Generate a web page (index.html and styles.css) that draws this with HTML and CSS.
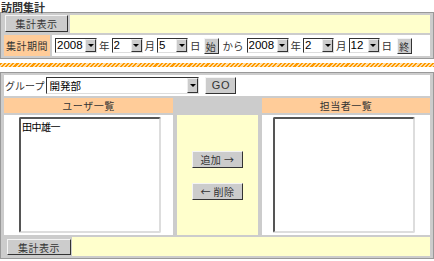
FILE: index.html
```html
<!DOCTYPE html>
<html>
<head>
	<title> 訪問集計 </title>
	<link rel="stylesheet" href="styles.css">
</head>
<body>
	<h1 class="title">訪問集計</h1>

	<div class="panel">
		<div class="row top">
			<input type="button" value="集計表示" class="btn btnSum">
			<div class="fill yellow"></div>
		</div>
		<div class="row dates">
			<div class="label orange">集計期間</div>
			<div class="fill white period">
				<span class="sel year"><select><option>2008</option></select><span class="arrow"></span></span>
				<span>年</span>
				<span class="sel small"><select><option>2</option></select><span class="arrow"></span></span>
				<span>月</span>
				<span class="sel small"><select><option>5</option></select><span class="arrow"></span></span>
				<span>日</span>
				<input type="button" value="始" class="btn btnDay">
				<span class="kara">から</span>
				<span class="sel year"><select><option>2008</option></select><span class="arrow"></span></span>
				<span>年</span>
				<span class="sel small"><select><option>2</option></select><span class="arrow"></span></span>
				<span>月</span>
				<span class="sel small"><select><option>12</option></select><span class="arrow"></span></span>
				<span>日</span>
				<input type="button" value="終" class="btn btnDay btnEnd">
			</div>
		</div>
	</div>

	<div class="hatch"></div>

	<div class="panel members">
		<div class="span white group">
			<span>グループ</span>
			<span class="sel groupSel"><select><option>開発部</option></select><span class="arrow"></span></span>
			<input type="button" value="GO" class="btn btnGo">
		</div>
		<div class="head orange">ユーザ一覧</div>
		<div class="head"></div>
		<div class="head orange">担当者一覧</div>
		<div class="white box boxLeft">
			<select class="list" multiple>
				<option>田中雄一</option>
			</select>
		</div>
		<div class="yellow moves">
			<input type="button" value="追加 →" class="btn btnMove">
			<input type="button" value="← 削除" class="btn btnMove">
		</div>
		<div class="white box boxRight">
			<select class="list" multiple></select>
		</div>
		<div class="span row bottom">
			<input type="button" value="集計表示" class="btn btnSum2">
			<div class="fill yellow"></div>
		</div>
	</div>
</body>
</html>
```

FILE: styles.css
```css
body {
	margin: 0;
	color: #333;
	background: #fff;
	font-family: "Noto Sans CJK JP", sans-serif;
	font-size: 10.5px;
}
.title {
	margin: 0 0 -1px;
	padding-left: 1px;
	height: 13px;
	line-height: 14px;
	font-size: 11px;
	font-weight: bold;
}
.panel {
	border: 1px solid #999;
	background: #ccc;
	padding: 2px 3px;
	display: flex;
	flex-direction: column;
	gap: 2px;
}
.row {
	display: flex;
	gap: 2px;
}
.top {
	height: 18px;
}
.dates {
	height: 21px;
}
.fill {
	flex: 1;
}
.yellow {
	background: #ffffcc;
}
.orange {
	background: #ffcc99;
}
.white {
	background: #fff;
}
.label {
	width: 46px;
	line-height: 21px;
	text-align: center;
	font-size: 10px;
	letter-spacing: 0.5px;
}
.period {
	display: flex;
	align-items: center;
	gap: 2px;
	padding-left: 3px;
}
.kara {
	margin: 0 1px 0 2px;
}

/* buttons */
.btn {
	font-family: "Noto Sans CJK JP", sans-serif;
	font-size: 10px;
	letter-spacing: 0.5px;
	color: #333;
	background: #ccc;
	border: 1px solid;
	border-color: #f4f4f4 #333 #333 #f4f4f4;
	padding: 0;
	margin: 0;
	height: 17px;
	line-height: 15px;
}
.btnSum {
	width: 63px;
	margin-left: 1px;
}
.btnSum2 {
	width: 64px;
	height: 16px;
	margin: 2px 0 0 3px;
}
.btnDay {
	width: 15px;
	height: 16px;
	margin-left: 1px;
}
.btnEnd {
	margin-left: 3px;
}
.btnGo {
	width: 31px;
	font-family: "Liberation Sans", sans-serif;
	font-size: 11px;
	margin-left: 4px;
}
.btnMove {
	width: 51px;
}

/* drop downs */
.sel {
	display: inline-flex;
	box-sizing: border-box;
	height: 15px;
	border: 1px solid;
	border-color: #333 #ddd #ddd #333;
	background: #fff;
}
.sel select {
	appearance: none;
	-webkit-appearance: none;
	flex: 1;
	min-width: 0;
	height: 100%;
	border: 0;
	padding: 0 1px;
	background: transparent;
	color: #000;
	font-family: "Liberation Sans", sans-serif;
	font-size: 11.5px;
	line-height: 13px;
	outline: none;
}
.year {
	width: 42px;
}
.small {
	width: 31px;
}
.arrow {
	width: 11px;
	box-sizing: border-box;
	background: #ccc;
	border: 1px solid;
	border-color: #eee #333 #333 #eee;
	display: flex;
	align-items: center;
	justify-content: center;
}
.arrow::before {
	content: "";
	border-left: 3px solid transparent;
	border-right: 3px solid transparent;
	border-top: 3px solid #000;
}

.hatch {
	height: 4px;
	margin: 4px 0 5px;
	background: repeating-linear-gradient(135deg, #ff9900 0 1.5px, #ffe0a8 1.5px 3px);
}

/* user lists */
.members {
	display: grid;
	grid-template-columns: 169px 81px 1fr;
	grid-template-rows: 21px 15px 120px 19px;
	column-gap: 4px;
	row-gap: 2px;
}
.span {
	grid-column: 1 / 4;
}
.group {
	display: flex;
	align-items: center;
	gap: 2px;
	padding-left: 1px;
	font-size: 10px;
}
.groupSel {
	width: 153px;
	height: 17px;
}
.groupSel select {
	font-family: "Noto Sans CJK JP", sans-serif;
	font-size: 10.5px;
	padding-left: 2px;
}
.head {
	text-align: center;
	line-height: 15px;
	font-size: 10px;
	letter-spacing: 0.5px;
}
.box {
	display: flex;
	align-items: center;
}
.boxLeft {
	padding-left: 15px;
}
.boxRight {
	padding-left: 11px;
}
.list {
	appearance: none;
	-webkit-appearance: none;
	box-sizing: border-box;
	width: 142px;
	height: 116px;
	margin: 0;
	padding: 0;
	border: 2px solid;
	border-color: #555 #ddd #ddd #555;
	background: #fff;
	color: #000;
	font-family: "Noto Sans CJK JP", sans-serif;
	font-size: 10px;
	letter-spacing: -0.5px;
	overflow: hidden;
	outline: none;
}
.list option {
	padding: 0 1px;
	line-height: 12px;
}
.moves {
	display: flex;
	flex-direction: column;
	align-items: center;
	justify-content: center;
	gap: 15px;
}
.bottom {
	gap: 1px;
}
```
